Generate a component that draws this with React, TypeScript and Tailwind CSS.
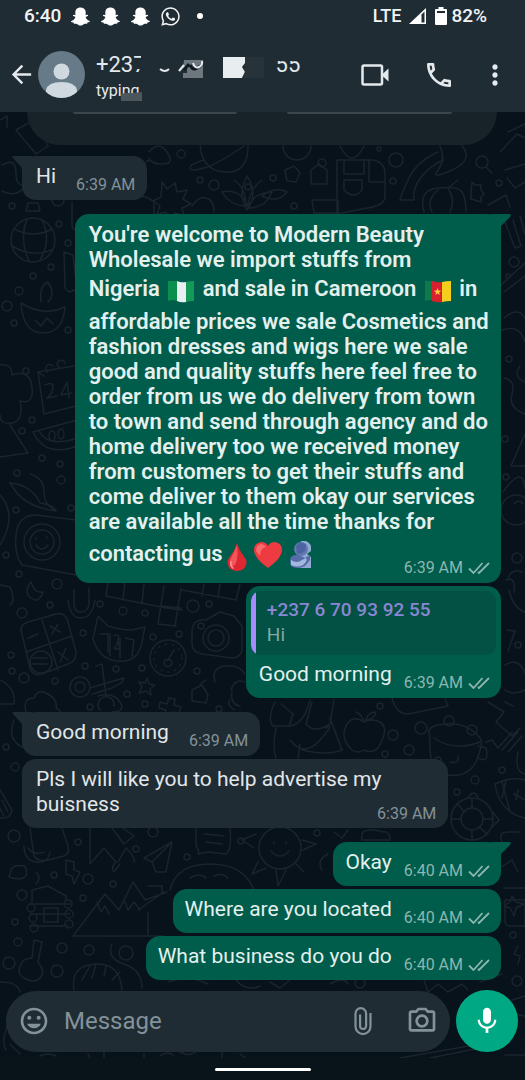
import type { ReactNode } from "react";
import { FaSnapchatGhost, FaWhatsapp } from "react-icons/fa";
import {
  MdArrowBack,
  MdInsertEmoticon,
  MdMic,
  MdMoreVert,
  MdOutlineCall,
  MdOutlineCameraAlt,
} from "react-icons/md";

const DOTS: [number, number, number][] = [
  [181, 154, 4], [248, 187, 3], [200, 180, 3], [214, 185, 5], [322, 163, 4], [396, 160, 7], [393, 181, 3],
  [273, 178, 3], [294, 206, 3], [379, 149, 2], [499, 183, 3], [514, 262, 5], [59, 224, 3], [68, 243, 3],
  [51, 267, 3], [33, 276, 3], [19, 291, 4], [7, 306, 5], [14, 323, 3], [68, 330, 3], [12, 206, 3],
  [26, 371, 3], [32, 420, 3], [22, 431, 3], [42, 458, 3], [60, 464, 3], [61, 480, 4], [17, 473, 3],
  [16, 510, 3], [71, 508, 3], [6, 555, 3], [19, 574, 3], [57, 584, 5], [22, 613, 5], [50, 605, 3],
  [100, 604, 3], [123, 611, 4], [145, 613, 3], [193, 606, 6], [209, 604, 3], [83, 633, 3], [179, 634, 3],
  [153, 637, 3], [11, 655, 3], [12, 671, 3], [24, 678, 5], [55, 681, 3], [85, 666, 3], [116, 669, 3],
  [142, 668, 3], [197, 671, 3], [127, 694, 3], [145, 704, 3], [90, 707, 3], [219, 709, 3], [6, 747, 3],
  [15, 767, 4], [14, 836, 6], [78, 842, 3], [54, 875, 3], [88, 879, 5], [113, 884, 3], [83, 898, 3],
  [22, 895, 5], [15, 922, 3], [18, 942, 4], [62, 948, 5], [89, 950, 5], [9, 963, 6], [57, 971, 6],
  [136, 849, 3], [153, 832, 5], [187, 857, 3], [241, 841, 3], [126, 953, 7], [317, 833, 3], [513, 935, 3],
  [517, 981, 5], [360, 983, 5], [517, 558, 5], [518, 645, 3], [380, 706, 3], [393, 735, 5], [385, 754, 3],
  [409, 750, 5], [421, 728, 6], [449, 721, 5], [472, 730, 5], [475, 780, 4], [502, 770, 3], [457, 792, 3],
  [438, 760, 3], [508, 276, 2], [509, 359, 3], [505, 439, 3], [506, 477, 3],
];

function Doodles() {
  return (
    <svg
      aria-hidden="true"
      className="absolute inset-0 h-full w-full"
      viewBox="0 0 525 1080"
      preserveAspectRatio="xMidYMin slice"
      fill="none"
      stroke="#1a242c"
      strokeWidth="1.5"
      strokeLinecap="round"
      strokeLinejoin="round"
    >
      {DOTS.map(([x, y, r]) => (
        <circle key={`${x}-${y}`} cx={x} cy={y} r={r} />
      ))}
      <path d="M16 130l18-10 14 26-12 8zM0 120l7-4v12M2 165q14-8 14 8t12 10q-10 16-26 8" />
      <path d="M28 203h10l2 8H26zM52 200a6 6 0 1 0 12 0M72 202v22q0 8 6 4" />
      <circle cx="33" cy="240" r="22" />
      <path d="M14 229q20 10 38 0M12 246q20 12 40 4M27 219q-8 20 2 42M42 220q10 20-2 40" />
      <path d="M64 252l9 3 4 34-8 3-4-4z" />
      <path d="M21 303q22 14 44 4q-2 26-22 26t-22-30zM41 302q-2-16 7-20q8 12 0 20M35 320l6 6 6-8 6 6" />
      <path d="M149 152q10-12 18 0t-4 12-14-6M156 164q-8-6-10-2M162 182l5 7 8-6 2 9 10-2-4 9 8 5-9 4 2 8-9-3-5 8-4-9-9 2 3-8-7-5 8-4z" />
      <path d="M200 140q0 30 24 32t24-26M204 160q-14 4-14 8t14 0 40-22M130 198q12-6 24 4v12M192 206q6-10 14-8t8 14" />
      <path d="M247 176q12 18 0 34q-10-16 0-34zM222 192q18-4 26 14q-18 0-26-14zM272 192q-18 0-24 16q18 0 24-16zM262 180q-12 8-14 26M234 180q12 8 12 26" />
      <path d="M283 146a14 14 0 1 0 28 0M340 146q6 12 12 12t12-12M337 160h36q12 2 12 14v24q-2 8-18 10l-30 6v-54zM344 160v14h20v-14M369 160v22h16M344 180h18v10q-8 10-18 0zM311 170l8-6 8 6v14h-16zM312 200h26v13h-24z" />
      <path d="M285 170l9-4 6 7-4 9-9-1zM262 196q12-10 25-4q-10 12-25 4z" />
      <path d="M438 152q-22 10-30 28t-8 20h14q-2-12 8-24t22-16M440 146q6 14-2 24t14 0 10-24" />
      <circle cx="482" cy="162" r="6" />
      <path d="M486 167l6 6M424 212q-6-22 14-24t24 4 4 20M438 190q-12 10-6 22M448 188q8 12 2 24M448 188l10-8M472 182l3 3h6v5l3 4-3 3v5l-10-3v-5z" />
      <path d="M508 132l17-8M500 152l17-18 8 4M505 170l20-6M507 178l8 10 10-6M488 205l18-10 4 12M505 222l10 26 6-2-8-26M520 216l5 18M501 285l24-22M504 292l21-16M504 318q14-12 21 0M502 330q18-6 23 12" />
      <path d="M0 365q12-2 12 10 18-6 20 12t-12 14q4 20-8 22t-12-8M10 425l18 28-28 4" />
      <path d="M38 372l36-6M38 372l6 42 32-8M44 376l-6-4M48 372a4 4 0 1 1 5-6M60 368a4 4 0 1 1 5-5M45 385q8-4 8 2t-6 11l10-2M67 382l-6 13 11-2M67 382l2 16" />
      <path d="M33 432l44-12M33 432q12 26 44 14M39 431q8 16 36 8" />
      <ellipse cx="52" cy="436" rx="3" ry="5" />
      <ellipse cx="61" cy="434" rx="3" ry="5" />
      <path d="M10 483q22 2 30 20 14 2 16 8-30-4-42-22zM30 474q14 4 14 18t12 18" />
      <path d="M76 520l-40-5q-18 0-20 20t6 30l54 10" />
      <circle cx="42" cy="542" r="18" />
      <circle cx="42" cy="542" r="12" />
      <path d="M36 545q6 8 12 0M36 538v1M47 537v1M0 495q18 20 0 50" />
      <path d="M0 585l10 2q6 14 0 18M31 582q-8 10 0 16t12-6q-8 2-12-10" />
      <path d="M74 590v14q0 8 7 8t8-8v-16M68 600q2 18 13 18t14-18" />
      <path d="M108 582l-2 14 60 12 16 2M125 582l-2 18M144 584l-2 20M164 586l-6 38M181 588l-6 38M158 624l18 2M161 606l20 2M182 590l54 10 4-16M204 584l-2 12M220 584l-2 14" />
      <path d="M22 634q-4-8 6-12l28-8q10-2 12 8l8 30q0 10-8 12l-26 10q-10 2-12-6zM42 620l16 50M26 652l46-16M28 638l10-4M50 626l10 6M58 624l-6 10M58 652l10 8M66 648l-6 14" />
      <circle cx="41" cy="662" r="11" />
      <path d="M33 658h14M32 664h16" />
      <path d="M98 616l10 10q12 4 24 4l13-3-4 20q-6 16-24 14t-24-22zM100 634h10v22M108 634v18M120 638v20M126 638l8 2-2 16M114 636q6-4 4 4t-4 8q8 4 4-6" />
      <circle cx="168" cy="658" r="18" />
      <circle cx="168" cy="658" r="14" strokeDasharray="1 6" />
      <path d="M168 660l6-10M165 660a4 4 0 1 0 6 0z" />
      <path d="M192 630q2-12 14-10l14-8 14 4 8 10v24q-2 8-10 8l-30-4q-10-2-10-10z" />
      <circle cx="216" cy="638" r="13" />
      <circle cx="216" cy="638" r="8" />
      <circle cx="201" cy="626" r="3" />
      <circle cx="80" cy="687" r="10" />
      <circle cx="80" cy="687" r="5" />
      <path d="M90 688l34-10q0 8-32 16M96 666l6-2 4 32M98 696q16-4 22 6t-8 10M100 710a8 8 0 1 1 14-4" />
      <path d="M147 678l2 6 6 1-5 4 1 6-5-4-7 2 3-6-3-5 6 1zM160 702l7 2 2-6 6 1-1 6 7 2-2 6-6-1-2 6-6-2 1-6-7-2zM192 690l10-5 6 10-2 8-14-2zM200 684l6-4" />
      <path d="M215 682q-4-14 10-16t20 8M231 690q4-12 14-8M230 700q-4 4 4 10M240 706q-10-2-8-14" />
      <path d="M26 712q-4-14 8-14 4-10 14-4t8 14q8 4 4 12M0 680q16 8 14 24l-14 0M14 720q-8 20 10 28" />
      <path d="M0 790l12 20q-2 10-12 8M2 800l6 12M0 808l4 8" />
      <path d="M30 828l4 28q4 6 14 4l16-4q6-2 4-10l-6-18M24 846q0 14 12 16t14-10M28 848q6 8 16 4" />
      <path d="M90 828v36l14-16 12 14q-6 6-2 10l6-8M118 862l8-14q10 10 8 14M112 828l12 16 10-8-14-10" />
      <path d="M172 842l-28 16 8 4 4 10 10 0zM172 842l-20 20" />
      <path d="M196 828l0 18q4 6 2 8l10-2 18 2q6-4 4-26M204 834l20 2M206 842l16 2" />
      <path d="M66 860l8 2 0 8 6 2-6 12-2-8-6-2zM11 870q2-6 14-4 4 10-2 12t-14-1zM36 872q6 6 0 12" />
      <path d="M32 902v-12l16-4 18 10v4M30 904h40M30 914h40M30 926h38M44 908h14v14H44z" />
      <circle cx="31" cy="908" r="4" />
      <circle cx="33" cy="918" r="4" />
      <circle cx="34" cy="928" r="4" />
      <circle cx="68" cy="904" r="4" />
      <circle cx="69" cy="914" r="4" />
      <circle cx="69" cy="924" r="4" />
      <path d="M73 936l32-42 14 16 14-28 12 18 22-8M73 936h90M97 902l4 10 4-6 4 8M124 900l4 10 6-8 6 8M138 910l26-18M148 912v24M148 886h14v8" />
      <path d="M170 890q6-26 40-26t44 26M190 878q10-6 16 0M214 876q8-4 14 2" />
      <path d="M34 940l8 2-4 20q8 10 2 16t-16 0 0-18q6-2 8-2z" />
      <path d="M74 990q-4-26 24-26 22 0 24 26M82 980l8-14M92 978l4-14M104 976l2-10M112 980l8-8M112 944q-6 14 12 20t18 24M0 982q18 0 20 10M10 1020q-10 20-4 30" />
      <path d="M10 1044l10 10M40 1056q8-4 16 0M88 1054l2 4M104 1052v6M144 1054v4M160 1056q8-6 14 0M180 1052q10 6 18-2M222 1052v6M240 1054l6 4M400 1058l80-14M430 1058l80-16M512 1000l13-4M514 1014l11 2M505 1055h20" />
      <path d="M168 982q20-8 40 2M236 980q10 12 24 6M270 982l10 6 10-8M330 984q14-8 18 0M424 980l4 12 10-8 10 8 14-8 6 6M480 982l22-8" />
      <circle cx="280" cy="848" r="21" />
      <path d="M271 851q9 10 18 0M274 842v2M286 842v2M256 834l-14 6 12 8M302 840l14 4-13 6M258 862l-6 12 14-6M276 870l2 16 8-16M296 864l8 8M322 870q-6-10 6-16M334 832l8 6 6-8M362 840q-2-10 8-10t12 2q8-2 8 8z" />
      <circle cx="472" cy="819" r="21" />
      <circle cx="472" cy="819" r="11" />
      <path d="M472 798v10M472 830v10M451 819h10M483 819h10M457 804l8 8M487 834l-8-7M468 798q6-10 10 0M493 812l6 8-8 8M502 842q-4-10 6-10t12 0M500 868l12-8 6 12M504 888h21M505 900h20v26h-16q-4 0-4-6zM518 946l-4 8 6 2-2 8" />
      <path d="M275 702q-8 16-2 24h16l4-12-12-10M290 726q14-2 20-26M312 702l-6 22q8 10 24 0l4-24M276 728q-4 20 0 30M290 740q14 18 30 0t6-12M330 718l12 32q-14 6-40 0M300 744l-2 14" />
      <path d="M364 722q-12-8-18 4t6 24q6 4 12 0 8 4 14-2 12-20 2-26-8-4-16 0zM364 722q-2-8-8-10M366 720q2-8 10-8-2 8-10 8" />
      <path d="M392 698q4 16 16 16l40-8-4-10M430 736q-2 30 12 38 24 6 34-12 8-20 4-24-16-20-46-12-8 4-4 10zM434 738q20 14 46 4M478 758q12 6 8-10l-8-2M450 762q10 2 8-6" />
      <path d="M486 742l6-2 6 8 14-16M502 750l16-18M508 752l14-16M488 702l16 10-8 10 16 14 8-8M505 702l8 4" />
      <path d="M495 784q16-8 30-4M495 784q4 28 30 34M502 782l8 30M506 780l-4 18M514 794l11 6M518 790l-2 10M518 752q-4 20 7 22" />
      <circle cx="516" cy="510" r="15" />
      <path d="M514 504q5-6 9 0M503 492q20-28 22-4M508 578q4-10 14-6M509 590q4 18 16 22M506 580q10-4 8 12M507 630l8 1-7 20M505 665q14-8 20 8M505 690q8 6 20 0M504 378q12 2 8 16t13 20M520 366q-8 10 5 16M525 434l-14 32h14" />
      <path d="M512 896l4 6 8 2-8 4-2 8-4-8-6-2 6-4z" />
    </svg>
  );
}

function Ticks() {
  return (
    <svg aria-label="Delivered" role="img" className="h-3 w-[22px]" viewBox="0 0 22 12" fill="none" stroke="currentColor" strokeWidth="1.8">
      <path d="M1 6.500l4.500 4.500L14.500 1M10 10l1 1L21 1" />
    </svg>
  );
}

function Time({ value, sent = false }: { value: string; sent?: boolean }) {
  return (
    <span
      className={
        sent
          ? "flex shrink-0 items-center gap-[5px] text-base leading-4 text-[#8cb6ae]"
          : "shrink-0 text-base leading-4 text-[#83929a]"
      }
    >
      <time>{value}</time>
      {sent && <Ticks />}
    </span>
  );
}

function Tail({ sent }: { sent: boolean }) {
  return sent ? (
    <svg aria-hidden="true" className="absolute top-0 -right-[10px] h-[14px] w-5 fill-[#005c4b]" viewBox="0 0 20 14">
      <path d="M0 0h18q3 0 1 3l-9 9v2H0z" />
    </svg>
  ) : (
    <svg aria-hidden="true" className="absolute top-0 -left-[10px] h-[14px] w-5 fill-[#202c33]" viewBox="0 0 20 14">
      <path d="M20 0H2q-3 0-1 2l9 10v2h10z" />
    </svg>
  );
}

type BubbleProps = { children: ReactNode; sent?: boolean; tail?: boolean; wide?: boolean };

function Bubble({ children, sent = false, tail = false, wide = false }: BubbleProps) {
  return (
    <li
      className={`relative rounded-[14px] ${wide ? "w-[89%]" : ""} ${tail ? "mt-[11px]" : ""} ${
        sent ? "self-end bg-[#005c4b] text-[#e4f0ee]" : "self-start bg-[#202c33] text-[#e1e6e9]"
      }`}
    >
      {tail && <Tail sent={sent} />}
      {children}
    </li>
  );
}

function Short({ text, time, sent = false, tail = false }: { text: string; time: string; sent?: boolean; tail?: boolean }) {
  return (
    <Bubble sent={sent} tail={tail}>
      <div className={`flex items-end pt-2 pb-[7px] ${sent ? "gap-3 pr-[11px] pl-3" : "gap-5 pr-3 pl-[14px]"}`}>
        <p className="mb-1">{text}</p>
        <Time value={time} sent={sent} />
      </div>
    </Bubble>
  );
}

function NigeriaFlag() {
  return (
    <svg role="img" aria-label="Nigeria" className="mx-[2px] mt-[9px] mb-1 inline-block h-6 w-7 align-middle" viewBox="0 2 28 24">
      <path d="M1 2q5-2 9 0v20q-4-2-9 0z" fill="#0b8f4f" />
      <path d="M10 2q4 2 9 1v20q-5 1-9-1z" fill="#e9eef0" />
      <path d="M19 3q4-1 8-1v20q-4 0-8 1z" fill="#149a57" />
    </svg>
  );
}

function CameroonFlag() {
  return (
    <svg role="img" aria-label="Cameroon" className="mx-[2px] mt-[9px] mb-1 inline-block h-6 w-7 align-middle" viewBox="0 2 28 24">
      <path d="M1 2q5-2 9 0v20q-4-2-9 0z" fill="#0d7a4a" />
      <path d="M8 2q5 2 11 1v20q-6 1-11-1z" fill="#d8202f" />
      <path d="M18 3q4-1 9-1v20q-5 0-9 1z" fill="#f6cf1d" />
      <path d="M13.500 9l1 2.600 2.700.1-2.100 1.700.8 2.600-2.400-1.500-2.200 1.500.7-2.600-2.100-1.700 2.700-.1z" fill="#ffc933" />
    </svg>
  );
}

function Drop() {
  return (
    <svg role="img" aria-label="Drop of blood" className="mt-2 mb-1 ml-1 inline-block h-[30px] w-5 align-middle" viewBox="0 0 20 30">
      <path d="M10 1q2 7 6 12t3.500 8.500Q18 29 10 29T.5 21.500Q0 18 4 13t6-12z" fill="#dd2832" />
      <path d="M10 3q1 8 0 14t-5 8q-4-4-1-9t6-13z" fill="#f2555b" />
      <path d="M4 20q-1 4 2 6" stroke="#ff9a9a" strokeWidth="1.500" fill="none" strokeLinecap="round" />
    </svg>
  );
}

function Heart() {
  return (
    <svg role="img" aria-label="Red heart" className="ml-[6px] inline-block h-7 w-[30px] align-middle" viewBox="0 0 30 28">
      <path d="M15 27Q1 17 1 9q0-7 7-8 5 0 7 4 2-4 7-4 7 1 7 8 0 8-14 18z" fill="#ee3a41" />
      <path d="M3 10q0-6 5-7 3 0 5 3-6 1-6 9z" fill="#fb6b6c" />
    </svg>
  );
}

function Hug() {
  return (
    <svg role="img" aria-label="People hugging" className="ml-[6px] inline-block h-7 w-6 align-middle" viewBox="0 0 24 28">
      <path d="M12 0h5q6 2 5 10l-4 3 4 3v11H8z" fill="#8fa9d2" />
      <circle cx="12" cy="8" r="7" fill="#6079b0" />
      <path d="M7 5q4-6 10-1l-1 6q-4 4-8 2z" fill="#4d63a2" />
      <path d="M2 16q5-4 10-1l4 2 5-3v5l-5 6q-8 4-14 0-2-5 0-9z" fill="#566ca9" />
      <path d="M2 19q6 4 11 0l4-2q2 3-3 7-6 3-12 0z" fill="#a3b8dc" />
    </svg>
  );
}

function StatusBar() {
  return (
    <div className="flex h-8 items-center justify-between pr-[38px] pl-6 text-[19px] font-medium text-[#f1f4f5]">
      <div className="flex items-center">
        <span className="mr-[10px]">6:40</span>
        <div className="flex gap-[11px] text-white">
          <FaSnapchatGhost size={19} />
          <FaSnapchatGhost size={19} />
          <FaSnapchatGhost size={19} />
        </div>
        <FaWhatsapp size={21} className="ml-[10px]" />
        <span className="ml-4 h-[6px] w-[6px] rounded-full bg-white" />
      </div>
      <div className="flex items-center">
        <span className="mr-2 text-lg">LTE</span>
        <svg aria-hidden="true" className="mr-[9px] h-4 w-[17px]" viewBox="0 0 17 16" fill="#fff">
          <path d="M0 16L17 0v16z" />
          <path d="M12.500 6.500L15.500 3.500v11h-3z" fill="#202c33" />
        </svg>
        <svg aria-hidden="true" className="mr-1 h-[18px] w-3" viewBox="0 0 12 18" fill="#fff">
          <path d="M3.500 0h5v2H11q1 0 1 1v14q0 1-1 1H1q-1 0-1-1V3q0-1 1-1h2.500z" />
          <path d="M2 4h8v2H2z" fill="#202c33" />
        </svg>
        <span>82%</span>
      </div>
    </div>
  );
}

function Header() {
  return (
    <header className="relative bg-[#202c33] text-[#e3e9ec]">
      <StatusBar />
      <div className="flex h-20 items-center pt-[5px] pr-[14px] pl-[7px]">
        <button type="button" aria-label="Back" className="shrink-0">
          <MdArrowBack size={29} />
        </button>
        <svg role="img" aria-label="Contact" className="ml-[2px] h-[47px] w-[47px] shrink-0" viewBox="0 0 47 47">
          <clipPath id="avatar">
            <circle cx="23.500" cy="23.500" r="23.500" />
          </clipPath>
          <g clipPath="url(#avatar)">
            <path d="M0 0h47v47H0z" fill="#667b87" />
            <circle cx="23.500" cy="20.500" r="8" fill="#d0d9df" />
            <path d="M8 47V39q2-8 15.500-8T39 39v8z" fill="#d0d9df" />
          </g>
        </svg>
        <div className="ml-[11px] min-w-0 flex-1 pt-1">
          <div className="flex h-7 items-center text-[22px] leading-7">
            <span className="relative whitespace-nowrap">
              +237
              <svg aria-hidden="true" className="absolute top-0 right-0 h-7 w-3" viewBox="0 0 12 28" fill="#202c33">
                <path d="M7 0h5v28H7zM1 9h7v9H1z" />
              </svg>
            </span>
            <svg aria-hidden="true" className="ml-3 h-7 w-[110px] shrink-0" viewBox="0 0 110 28">
              <path d="M2 18q5 4 9 0" fill="none" stroke="#e3e9ec" strokeWidth="2" />
              <path d="M26 9h19v18H25v-5h4v-4h-4z" fill="#6d777d" />
              <path d="M26 19l5-6M32 14q3 6 7 3t5-2" fill="none" stroke="#111a20" strokeWidth="3" />
              <path d="M21 20l5-6M35 12q2 6 6 4t3-6" fill="none" stroke="#e3e9ec" strokeWidth="2" />
              <path d="M65 6h22v6l-3 4 3 5-3 6H65z" fill="#e8edf0" />
              <path d="M87 6h19v21H84l3-6z" fill="#273239" />
            </svg>
            <span className="relative ml-2">
              55
              <span className="absolute top-0 left-0 h-[10px] w-full bg-[#202c33]" />
            </span>
          </div>
          <div className="relative w-12 text-base leading-6">
            typing
            <svg aria-hidden="true" className="absolute top-[12px] left-[25px] h-[10px] w-[21px]" viewBox="0 0 21 10">
              <path d="M0 3l4-1h8l9-1v9H0z" fill="#4b565c" />
            </svg>
          </div>
        </div>
        <button type="button" aria-label="Video call" className="shrink-0">
          <svg className="h-[22px] w-7" viewBox="0 0 28 22" fill="none" stroke="currentColor" strokeWidth="2.500">
            <rect x="1.500" y="1.500" width="19.500" height="19" rx="1.500" />
            <path d="M20.500 11l7-6.500v13z" fill="currentColor" stroke="none" />
          </svg>
        </button>
        <button type="button" aria-label="Voice call" className="ml-[34px] shrink-0">
          <MdOutlineCall size={32} />
        </button>
        <button type="button" aria-label="More options" className="ml-6 shrink-0">
          <MdMoreVert size={32} />
        </button>
      </div>
    </header>
  );
}

function Composer() {
  return (
    <form className="relative flex items-center gap-[6px] pr-[7px] pl-[6px]" onSubmit={(e) => e.preventDefault()}>
      <div className="flex h-[61px] min-w-0 flex-1 items-center rounded-full bg-[#202c33] px-3 text-[#83929a]">
        <button type="button" aria-label="Emoji" className="shrink-0">
          <MdInsertEmoticon size={32} />
        </button>
        <input
          aria-label="Message"
          placeholder="Message"
          className="ml-[14px] min-w-0 flex-1 bg-transparent text-2xl text-[#e1e6e9] outline-none placeholder:text-[#83929a]"
        />
        <button type="button" aria-label="Attach" className="shrink-0">
          <svg className="h-7 w-[18px]" viewBox="0 0 18 28" fill="none" stroke="currentColor" strokeWidth="2.200">
            <path d="M16.500 6v13.500a7.500 7.500 0 0 1-15 0V6.500a5.300 5.300 0 0 1 10.600 0V19a3 3 0 0 1-6 0V7.500" />
          </svg>
        </button>
        <button type="button" aria-label="Camera" className="ml-[34px] shrink-0">
          <MdOutlineCameraAlt size={32} />
        </button>
      </div>
      <button
        type="button"
        aria-label="Record voice message"
        className="flex h-[62px] w-[62px] shrink-0 items-center justify-center rounded-full bg-[#00a884] text-white"
      >
        <MdMic size={32} />
      </button>
    </form>
  );
}

export default function App() {
  return (
    <div className="relative flex min-h-screen flex-col overflow-hidden bg-[#07121a] font-['Roboto',sans-serif]">
      <Doodles />
      <Header />
      <main className="relative flex-1 text-[21px] leading-[25px]">
        <div className="mr-7 ml-[27px] flex h-[33px] items-start justify-center gap-[50px] rounded-b-[33px] bg-[#182229]">
          <span className="h-[2px] w-[35%] rounded-b-full bg-[#3a464d]" />
          <span className="h-[2px] w-[35%] rounded-b-full bg-[#3a464d]" />
        </div>
        <ul className="flex flex-col gap-[3px] pr-6 pl-[22px]">
          <Short text="Hi" time="6:39 AM" tail />
          <Bubble sent tail wide>
            <div className="flex flex-col pt-2 pb-[7px] pl-[14px]">
              <p className="text-[22px] leading-[25px] font-semibold">
                You're welcome to Modern Beauty
                <br />
                Wholesale we import stuffs from
                <br />
                Nigeria <NigeriaFlag /> and sale in Cameroon <CameroonFlag /> in
                <br />
                affordable prices we sale Cosmetics and
                <br />
                fashion dresses and wigs here we sale
                <br />
                good and quality stuffs here feel free to
                <br />
                order from us we do delivery from town
                <br />
                to town and send through agency and do
                <br />
                home delivery too we received money
                <br />
                from customers to get their stuffs and
                <br />
                come deliver to them okay our services
                <br />
                are available all the time thanks for
                <br />
                contacting us
                <Drop />
                <Heart />
                <Hug />
              </p>
              <div className="-mt-4 mr-[11px] self-end">
                <Time value="6:39 AM" sent />
              </div>
            </div>
          </Bubble>
          <Bubble sent>
            <blockquote className="mx-[5px] mt-[5px] flex h-16 overflow-hidden rounded-[10px] bg-[#025144]">
              <span className="w-[5px] bg-[#a78bfa]" />
              <div className="pt-[6px] pl-[11px] text-[19px]">
                <p className="leading-[25px] font-medium text-[#8a87d3]">+237 6 70 93 92 55</p>
                <p className="leading-[26px] text-[#84aaa3]">Hi</p>
              </div>
            </blockquote>
            <div className="flex items-end gap-3 pt-[7px] pr-[11px] pb-[7px] pl-[13px]">
              <p className="mb-1">Good morning</p>
              <Time value="6:39 AM" sent />
            </div>
          </Bubble>
          <Short text="Good morning" time="6:39 AM" tail />
          <Bubble wide>
            <div className="flex flex-col pt-2 pr-3 pb-[6px] pl-[14px]">
              <p>
                Pls I will like you to help advertise my
                <br />
                buisness
              </p>
              <div className="-mt-[11px] flex self-end">
                <Time value="6:39 AM" />
              </div>
            </div>
          </Bubble>
          <Short text="Okay" time="6:40 AM" sent tail />
          <Short text="Where are you located" time="6:40 AM" sent />
          <Short text="What business do you do" time="6:40 AM" sent />
        </ul>
      </main>
      <footer className="relative mt-[10px]">
        <Composer />
        <div className="mt-[6px] flex h-[22px] items-center justify-center bg-[#09131a]">
          <span className="h-[3px] w-24 rounded-full bg-white" />
        </div>
      </footer>
    </div>
  );
}
